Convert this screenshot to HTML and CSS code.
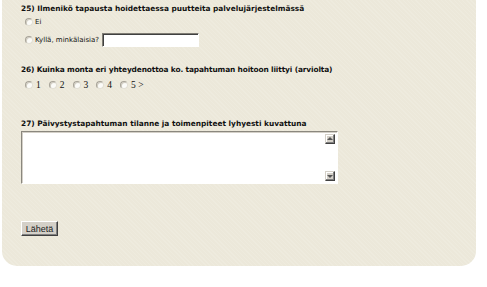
FILE: index.html
```html
<!DOCTYPE html>
<html lang="fi">
<head>
  <meta charset="UTF-8" />
  <title>Päivystystapahtuma</title>
  <link rel="stylesheet" href="styles.css">
</head>
<body>

  <!-- Lomake -->
  <form class="panel" onsubmit="return false">

    <div class="q-title q25">25) Ilmenikö tapausta hoidettaessa puutteita palvelujärjestelmässä</div>
    <label class="opt opt-ei"><input type="radio" name="q25" /> Ei</label>
    <label class="opt opt-kylla"><input type="radio" name="q25" /> Kyllä, minkälaisia? <input type="text" class="field" /></label>

    <div class="q-title q26">26) Kuinka monta eri yhteydenottoa ko. tapahtuman hoitoon liittyi (arviolta)</div>
    <div class="radio-row">
      <label><input type="radio" name="q26" />1</label>
      <label><input type="radio" name="q26" />2</label>
      <label><input type="radio" name="q26" />3</label>
      <label><input type="radio" name="q26" />4</label>
      <label><input type="radio" name="q26" />5 &gt;</label>
    </div>

    <div class="q-title q27">27) Päivystystapahtuman tilanne ja toimenpiteet lyhyesti kuvattuna</div>
    <div class="textbox">
      <textarea></textarea>
      <div class="scrollbar">
        <span class="arrow up"></span>
        <span class="arrow down"></span>
      </div>
    </div>

    <button type="submit" class="send">Lähetä</button>
  </form>

</body>
</html>
```

FILE: styles.css
```css
* {
  box-sizing: border-box;
}
body {
  margin: 0;
  background: #fff;
  font-family: 'DejaVu Sans', Verdana, sans-serif;
  color: #111;
}

/* Panel */
.panel {
  display: flex;
  flex-direction: column;
  align-items: flex-start;
  margin-left: 2px;
  width: 474px;
  padding: 3px 0 30px 19px;
  background-color: #ece8da;
  background-image: repeating-linear-gradient(45deg, rgba(255,255,255,0.12) 0 1px, transparent 1px 3px);
  border-radius: 0 0 15px 15px;
}

.q-title {
  font-size: 7.4px;
  font-weight: bold;
  line-height: 12px;
  height: 12px;
  white-space: nowrap;
}
.q26 {
  margin-top: 16px;
  letter-spacing: -0.12px;
}
.q27 { margin-top: 27px; }

/* Options */
.opt {
  display: flex;
  align-items: center;
  font-size: 7px;
  padding-left: 4px;
  white-space: nowrap;
}
.opt-ei {
  height: 12px;
  margin-top: 1px;
}
.opt-kylla {
  height: 16px;
  margin-top: 4px;
}

input[type="radio"] {
  appearance: none;
  -webkit-appearance: none;
  width: 8px;
  height: 8px;
  margin: 0 2px 0 0;
  border-radius: 50%;
  border: 1px solid #a7a398;
  border-right-color: #e2dfd4;
  border-bottom-color: #e2dfd4;
  background: #fbfbf8;
  box-shadow: inset 1px 1px 0 #d0ccc0;
}

.field {
  width: 97px;
  height: 14px;
  margin-left: 3px;
  border: 1px solid #fff;
  border-top-color: #7f7c74;
  border-left-color: #7f7c74;
  box-shadow: inset 1px 1px 0 #404040;
  background: #fff;
  padding: 0;
}

/* 26 radios */
.radio-row {
  display: flex;
  align-items: center;
  height: 12px;
  margin-top: 3px;
  padding-left: 4px;
  gap: 8px;
  font-family: 'Liberation Serif', 'Times New Roman', serif;
  font-size: 9.5px;
}
.radio-row label {
  display: flex;
  align-items: center;
  white-space: nowrap;
}
.radio-row input[type="radio"] {
  margin-right: 3px;
}

/* Textarea */
.textbox {
  display: flex;
  margin-top: 1px;
  width: 317px;
  height: 53px;
  background: #fff;
  border: 1px solid #fff;
  border-top-color: #8a877e;
  border-left-color: #8a877e;
  box-shadow: inset 1px 1px 0 #d4d0c8;
  padding: 2px;
}
.textbox textarea {
  flex: 1;
  border: none;
  resize: none;
  outline: none;
  background: transparent;
}
.scrollbar {
  width: 10px;
  display: flex;
  flex-direction: column;
  justify-content: space-between;
}
.arrow {
  position: relative;
  width: 10px;
  height: 10px;
  background: #d4d0c8;
  border: 1px solid #d4d0c8;
  border-right-color: #404040;
  border-bottom-color: #404040;
  box-shadow: inset -1px -1px 0 #808080, inset 1px 1px 0 #fff;
}
.arrow::after {
  content: "";
  position: absolute;
  left: 1px;
  border-left: 3px solid transparent;
  border-right: 3px solid transparent;
}
.arrow.up::after {
  top: 2px;
  border-bottom: 3px solid #555;
}
.arrow.down::after {
  top: 3px;
  border-top: 3px solid #555;
}

/* Button */
.send {
  margin-top: 37px;
  width: 37px;
  height: 15px;
  padding: 0;
  font-family: 'Liberation Sans', Arial, sans-serif;
  font-size: 9px;
  color: #222;
  background: #d4d0c8;
  border: 1px solid #fff;
  border-right-color: #404040;
  border-bottom-color: #404040;
  box-shadow: inset -1px -1px 0 #808080;
  border-radius: 0;
}
```
